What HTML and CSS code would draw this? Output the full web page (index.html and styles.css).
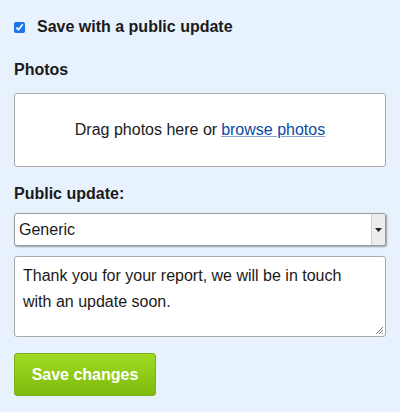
FILE: index.html
```html
<!DOCTYPE html>
<html>
<head>
<meta charset="utf-8">
<link rel="stylesheet" href="styles.css">
</head>
<body>
<form class="form">
  <label class="check-row">
    <input type="checkbox" class="check" checked>
    <span>Save with a public update</span>
  </label>
  <div class="label photos-label">Photos</div>
  <div class="dropzone">Drag photos here or <a href="#" class="link">browse photos</a></div>
  <div class="label update-label">Public update:</div>
  <div class="select">
    <span class="select-text">Generic</span>
    <span class="select-btn"><svg width="7" height="4" viewBox="0 0 7 4"><path d="M0 0h7L3.5 4z" fill="#222"/></svg></span>
  </div>
  <div class="textarea">Thank you for your report, we will be in touch with an update soon.
    <svg class="grip" width="10" height="10" viewBox="0 0 10 10"><path d="M9 2L2 9M9 5L5 9M9 8L8 9" stroke="#777" stroke-width="1"/></svg>
  </div>
  <button type="button" class="btn">Save changes</button>
</form>
</body>
</html>
```
FILE: styles.css
```css
html, body { margin: 0; padding: 0; }
body {
  background: #e8f2fe;
  font-family: "Liberation Sans", Arial, sans-serif;
  color: #1a1a1a;
  width: 400px;
  height: 412px;
  overflow: hidden;
}
.form {
  padding: 16px 14px 0 14px;
  display: flex;
  flex-direction: column;
}
.check-row {
  display: flex;
  align-items: center;
  gap: 12px;
  font-weight: bold;
  font-size: 16px;
  height: 20px;
  margin-top: 1px;
}
.check {
  margin: 0;
  width: 11px;
  height: 11px;
  accent-color: #1a73e8;
}
.label {
  font-weight: bold;
  font-size: 16px;
  line-height: 20px;
}
.photos-label { margin-top: 23px; }
.dropzone {
  margin-top: 13px;
  height: 72px;
  background: #fff;
  border: 1px solid #a9a9a9;
  border-radius: 3px;
  display: flex;
  align-items: center;
  justify-content: center;
  font-size: 16px;
}
.link { color: #0b4aa5; margin-left: 4px; text-decoration-color: #8aa4cc; }
.update-label { margin-top: 17px; }
.select {
  margin-top: 9px;
  height: 31px;
  background: #fff;
  border: 1px solid #9a9a9a;
  border-radius: 3px;
  box-shadow: 1px 1px 2px rgba(0,0,0,0.35);
  display: flex;
  align-items: center;
  font-size: 16px;
  overflow: hidden;
}
.select-text { flex: 1; padding-left: 4px; }
.select-btn {
  width: 13px;
  align-self: stretch;
  background: #ececec;
  border-left: 1px solid #d0d0d0;
  display: flex;
  align-items: center;
  justify-content: center;
}
.textarea {
  position: relative;
  margin-top: 10px;
  height: 81px;
  box-sizing: border-box;
  background: #fff;
  border: 1px solid #a9a9a9;
  border-radius: 3px;
  padding: 6px 22px 0 8px;
  font-size: 16px;
  line-height: 26px;
}
.grip { position: absolute; right: 1px; bottom: 1px; }
.btn {
  margin-top: 16px;
  align-self: flex-start;
  width: 142px;
  height: 43px;
  border: 1px solid #7aae1a;
  border-radius: 3px;
  background: linear-gradient(#9fdb23, #7fba0e);
  color: #fff;
  font-family: "Liberation Sans", Arial, sans-serif;
  font-weight: bold;
  font-size: 16px;
  padding: 0;
}
```
